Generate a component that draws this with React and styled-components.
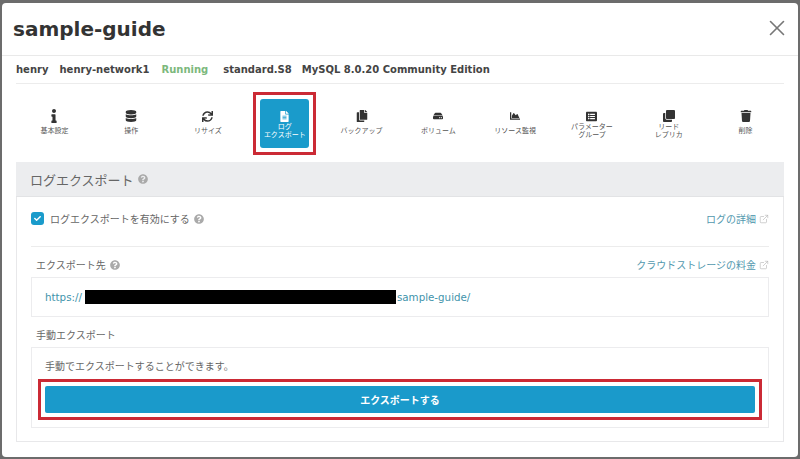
import React from "react";
import styled, { createGlobalStyle } from "styled-components";
import { X, ExternalLink } from "lucide-react";
import {
  FaInfo,
  FaDatabase,
  FaSync,
  FaFileAlt,
  FaCopy,
  FaHdd,
  FaChartArea,
  FaListAlt,
  FaClone,
  FaTrash,
  FaQuestionCircle,
  FaCheck,
} from "react-icons/fa";

const GlobalStyles = createGlobalStyle`
  html, body {
    margin: 0;
    background: #6c6c6c;
  }
  body {
    font-family: "DejaVu Sans", "Noto Sans CJK JP", sans-serif;
    color: #555;
  }
  * {
    box-sizing: border-box;
  }
`;

const Modal = styled.div`
  width: 796px;
  height: 454px;
  margin: 3px 2px 2px;
  background: #fff;
  border-radius: 4px;
  overflow: hidden;
`;

const Header = styled.header`
  height: 53px;
  padding: 0 8px 0 11px;
  display: flex;
  align-items: center;
  justify-content: space-between;
  border-bottom: 1px solid #e9e9e9;
`;

const Title = styled.h1`
  margin: 0;
  font-size: 20px;
  font-weight: 700;
  color: #333;
`;

const CloseButton = styled.span`
  display: flex;
  margin-bottom: 3px;
  color: #777;
`;

const InfoRow = styled.div`
  height: 28px;
  margin: 0 14px;
  display: flex;
  align-items: center;
  border-bottom: 1px solid #ececec;
  font-size: 10px;
  font-weight: 700;
  color: #444;
`;

const InfoItem = styled.span`
  margin-right: ${(p) => p.$gap}px;
  color: ${(p) => p.$color || "inherit"};
`;

const Nav = styled.nav`
  margin: 0 14px;
  padding-top: 15px;
  display: grid;
  grid-template-columns: repeat(10, 1fr);
`;

// red annotation frame drawn around the marked parts of the screenshot
const Highlight = styled.div`
  outline: ${(p) => (p.$off ? "none" : "3px solid #cb2a35")};
  outline-offset: 4px;
`;

const NavCell = styled(Highlight)`
  width: 49px;
  height: 49px;
  justify-self: center;
`;

const NavItem = styled.div`
  height: 49px;
  padding-top: 11px;
  display: flex;
  flex-direction: column;
  align-items: center;
  border-radius: 3px;
  color: ${(p) => (p.$active ? "#fff" : "#333")};
  background: ${(p) => (p.$active ? "#1a9bcb" : "transparent")};
`;

const NavIcon = styled.span`
  height: 12px;
  display: flex;
  align-items: center;
  justify-content: center;
  font-size: ${(p) => p.$size}px;
`;

const NavLabel = styled.span`
  height: 15px;
  margin-top: 2px;
  display: flex;
  align-items: center;
  font-size: 7px;
  line-height: 7.5px;
  text-align: center;
  white-space: pre;
  color: ${(p) => (p.$active ? "#fff" : "#555")};
`;

const Panel = styled.section`
  margin: 14px 14px 0;
  height: 280px;
  border: 1px solid #e8e8ea;
  border-top: 0;
`;

const PanelHeader = styled.div`
  height: 35px;
  margin: 0 -1px;
  padding: 0 14px;
  display: flex;
  align-items: center;
  gap: 4px;
  background: #ecedef;
  border-bottom: 1px solid #e2e3e5;
  font-size: 13px;
  color: #666;
`;

const PanelBody = styled.div`
  padding: 0 14px;
`;

const EnableRow = styled.div`
  height: 50px;
  padding-top: 15px;
  display: flex;
  justify-content: space-between;
  border-bottom: 1px solid #ececec;
`;

const CheckLabel = styled.label`
  height: 13px;
  display: flex;
  align-items: center;
  gap: 4px;
  font-size: 10px;
  color: #666;
`;

const CheckBox = styled.span`
  width: 13px;
  height: 13px;
  margin-right: 2px;
  display: flex;
  align-items: center;
  justify-content: center;
  border-radius: 3px;
  background: #1a9bcb;
  color: #fff;
  font-size: 7px;
`;

const Help = styled(FaQuestionCircle)`
  color: #aaa;
  font-size: 10px;
  flex: none;
`;

const DocLink = styled.a`
  height: 13px;
  display: flex;
  align-items: center;
  gap: 3px;
  font-size: 10px;
  color: #5298ae;
  svg {
    color: #b5b5b5;
  }
`;

const FieldHead = styled.div`
  height: 30px;
  padding: 11px 0 0 5px;
  display: flex;
  justify-content: space-between;
`;

const FieldLabel = styled.div`
  display: flex;
  align-items: center;
  gap: 4px;
  height: 13px;
  font-size: 10px;
  color: #666;
`;

const SubHead = styled.div`
  height: 30px;
  padding: 11px 0 0 5px;
`;

const PathBox = styled.div`
  height: 40px;
  padding-left: 13px;
  display: flex;
  align-items: center;
  border: 1px solid #ececee;
  font-size: 10.3px;
  color: #3f93ab;
`;

const Redacted = styled.span`
  width: 311px;
  height: 14px;
  margin: 0 1px 0 3px;
  background: #000;
`;

const ExportBox = styled.div`
  height: 81px;
  padding: 12px 13px 0;
  border: 1px solid #ececee;
`;

const ExportNote = styled.p`
  margin: 0 0 13px;
  height: 13px;
  line-height: 13px;
  font-size: 10px;
  color: #666;
`;

const ExportButton = styled.button`
  display: block;
  width: 710px;
  height: 27px;
  padding: 0;
  border: 0;
  border-radius: 2px;
  background: #1a9acb;
  color: #fff;
  font-family: inherit;
  font-size: 10px;
  font-weight: 700;
`;

const navItems = [
  { icon: <FaInfo />, size: 14, label: "基本設定" },
  { icon: <FaDatabase />, size: 12, label: "操作" },
  { icon: <FaSync />, size: 11, label: "リサイズ" },
  { icon: <FaFileAlt />, size: 11, label: "ログ\nエクスポート", active: true },
  { icon: <FaCopy />, size: 12, label: "バックアップ" },
  { icon: <FaHdd />, size: 10, label: "ボリューム" },
  { icon: <FaChartArea />, size: 10, label: "リソース監視" },
  { icon: <FaListAlt />, size: 11, label: "パラメーター\nグループ" },
  { icon: <FaClone />, size: 12, label: "リード\nレプリカ" },
  { icon: <FaTrash />, size: 12, label: "削除" },
];

function App() {
  return (
    <>
      <GlobalStyles />
      <Modal>
        <Header>
          <Title>sample-guide</Title>
          <CloseButton>
            <X size={26} strokeWidth={1.5} />
          </CloseButton>
        </Header>
        <InfoRow>
          <InfoItem $gap={11}>henry</InfoItem>
          <InfoItem $gap={12}>henry-network1</InfoItem>
          <InfoItem $gap={15} $color="#7cb87c">Running</InfoItem>
          <InfoItem $gap={10}>standard.S8</InfoItem>
          <InfoItem $gap={0}>MySQL 8.0.20 Community Edition</InfoItem>
        </InfoRow>
        <Nav>
          {navItems.map((item) => (
            <NavCell key={item.label} $off={!item.active}>
              <NavItem $active={item.active}>
                <NavIcon $size={item.size}>{item.icon}</NavIcon>
                <NavLabel $active={item.active}>{item.label}</NavLabel>
              </NavItem>
            </NavCell>
          ))}
        </Nav>
        <Panel>
          <PanelHeader>
            ログエクスポート
            <Help />
          </PanelHeader>
          <PanelBody>
            <EnableRow>
              <CheckLabel>
                <CheckBox>
                  <FaCheck />
                </CheckBox>
                ログエクスポートを有効にする
                <Help />
              </CheckLabel>
              <DocLink>
                ログの詳細
                <ExternalLink size={10} strokeWidth={1.5} />
              </DocLink>
            </EnableRow>
            <FieldHead>
              <FieldLabel>
                エクスポート先
                <Help />
              </FieldLabel>
              <DocLink>
                クラウドストレージの料金
                <ExternalLink size={10} strokeWidth={1.5} />
              </DocLink>
            </FieldHead>
            <PathBox>
              https://
              <Redacted />
              sample-guide/
            </PathBox>
            <SubHead>
              <FieldLabel>手動エクスポート</FieldLabel>
            </SubHead>
            <ExportBox>
              <ExportNote>手動でエクスポートすることができます。</ExportNote>
              <Highlight>
                <ExportButton>エクスポートする</ExportButton>
              </Highlight>
            </ExportBox>
          </PanelBody>
        </Panel>
      </Modal>
    </>
  );
}

export default App;
